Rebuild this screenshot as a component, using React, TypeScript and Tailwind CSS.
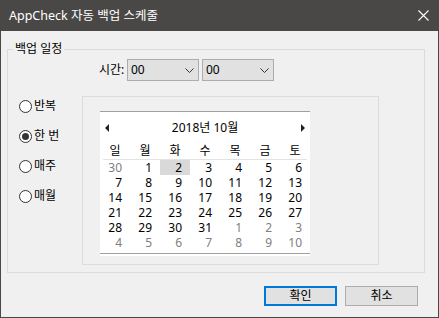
import { useState } from 'react';

const weekDays = ['일', '월', '화', '수', '목', '금', '토'];

// October 2018 grid, starts on Sunday Sep 30
const days: { n: number; cur: boolean }[] = [
  { n: 30, cur: false },
  ...Array.from({ length: 31 }, (_, i) => ({ n: i + 1, cur: true })),
  ...Array.from({ length: 10 }, (_, i) => ({ n: i + 1, cur: false })),
];

const options = ['반복', '한 번', '매주', '매월'];

function Select({ value }: { value: string }) {
  return (
    <div className="w-[72px] h-[22px] border border-[#adadad] bg-[#e1e1e1] flex items-center justify-between pl-[3px] pr-[4px]">
      <span className="leading-[16px]">{value}</span>
      <svg width="9" height="5" viewBox="0 0 9 5">
        <polyline points="0.5,0.5 4.5,4.5 8.5,0.5" fill="none" stroke="#333" strokeWidth="1" />
      </svg>
    </div>
  );
}

export default function App() {
  const [mode, setMode] = useState('한 번');
  const [selected, setSelected] = useState(2);

  return (
    <div
      className="w-[439px] h-[318px] bg-[#f0f0f0] flex flex-col border-x border-b border-[#4a4846] overflow-hidden text-[12px] text-black"
      style={{ fontFamily: '"Noto Sans", "Noto Sans CJK KR", sans-serif' }}
    >
      {/* Title bar */}
      <div className="h-[31px] shrink-0 bg-[#4a4846] flex items-center justify-between pl-[8px] pr-[9px] text-white">
        <span className="leading-[16px] text-[12.5px]">AppCheck 자동 백업 스케줄</span>
        <svg width="11" height="11" viewBox="0 0 11 11">
          <path d="M0.5 0.5 L10.5 10.5 M10.5 0.5 L0.5 10.5" stroke="#fff" strokeWidth="1.1" />
        </svg>
      </div>

      {/* Group box */}
      <div className="relative ml-[6px] mt-[18px] w-[418px] h-[224px] shrink-0 border border-[#dcdcdc]">
        <span className="absolute left-[5px] top-[-9px] px-[2px] bg-[#f0f0f0] leading-[16px]">백업 일정</span>

        {/* Time row */}
        <div className="flex items-center pl-[91px] pt-[9px]">
          <span className="w-[28px] leading-[16px]">시간:</span>
          <Select value="00" />
          <div className="w-[3px]" />
          <Select value="00" />
        </div>

        <div className="flex mt-[15px]">
          {/* Radios */}
          <div className="w-[74px] pl-[11px] pt-[1px] flex flex-col gap-[12px]">
            {options.map((o) => (
              <div key={o} className="flex items-center h-[18px] gap-[2px] cursor-default" onClick={() => setMode(o)}>
                <div className="w-[13px] h-[13px] rounded-full border border-[#333] bg-white flex items-center justify-center">
                  {mode === o && <div className="w-[7px] h-[7px] rounded-full bg-[#333]" />}
                </div>
                <span className="leading-[16px]">{o}</span>
              </div>
            ))}
          </div>

          {/* Calendar panel */}
          <div className="w-[297px] h-[169px] border border-[#dcdcdc] pl-[17px] pt-[14px]">
            <div className="w-[210px] bg-white border-t border-[#a0a0a0] flex flex-col">
              <div className="mt-[7px] h-[18px] flex items-center justify-between px-[5px]">
                <svg width="4" height="8" viewBox="0 0 4 8">
                  <polygon points="4,0 0,4 4,8" fill="#222" />
                </svg>
                <span className="leading-[16px]">2018년 10월</span>
                <svg width="4" height="8" viewBox="0 0 4 8">
                  <polygon points="0,0 4,4 0,8" fill="#222" />
                </svg>
              </div>
              <div className="mt-[5px] h-[17px] grid grid-cols-7">
                {weekDays.map((d) => (
                  <span key={d} className="text-center leading-[17px]">{d}</span>
                ))}
              </div>
              <div className="mx-[3px] h-px bg-[#e3e3e3]" />
              <div className="grid grid-cols-7">
                {days.map((d, i) => (
                  <span
                    key={i}
                    onClick={() => d.cur && setSelected(d.n)}
                    className={`h-[15px] leading-[15px] text-right pr-[8px] ${d.cur ? 'text-black' : 'text-[#808080]'} ${d.cur && d.n === selected ? 'bg-[#d9d9d9]' : ''}`}
                  >
                    {d.n}
                  </span>
                ))}
              </div>
              <div className="mt-[3px] h-px bg-[#a0a0a0]" />
              <div className="h-[2px]" />
            </div>
          </div>
        </div>
      </div>

      {/* Buttons */}
      <div className="flex justify-end gap-[8px] pr-[20px] mt-[13px]">
        <button className="w-[73px] h-[20px] border-2 border-[#0078d7] bg-[#e1e1e1] leading-[14px]">확인</button>
        <button className="w-[73px] h-[20px] border border-[#adadad] bg-[#e1e1e1] leading-[16px]">취소</button>
      </div>
    </div>
  );
}
